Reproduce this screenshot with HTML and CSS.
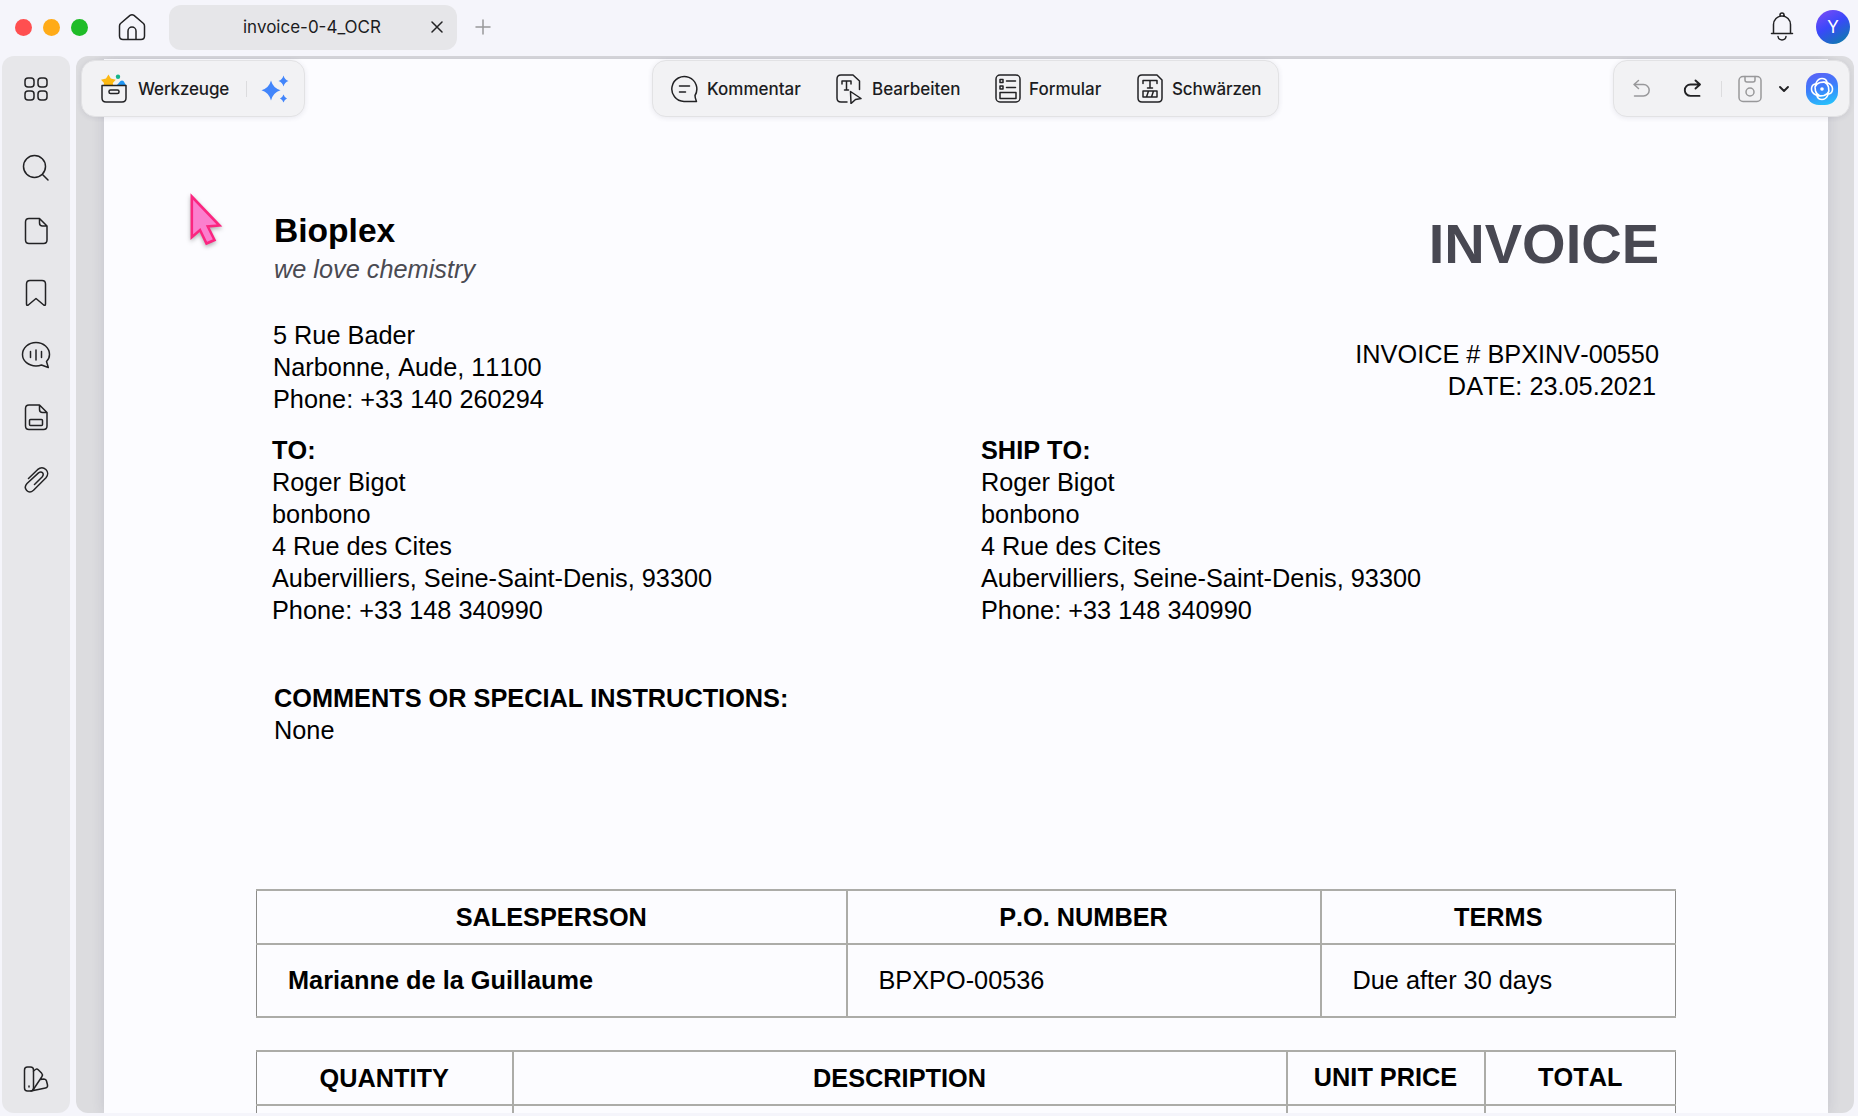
FILE: index.html
```html
<!DOCTYPE html>
<html lang="de">
<head>
  <meta charset="UTF-8">
  <meta name="viewport" content="width=device-width, initial-scale=1.0">
  <title>invoice-0-4_OCR</title>
  <link rel="stylesheet" href="styles.css">
</head>
<body>
  <header class="titlebar">
    <div class="lights">
      <span class="light red"></span>
      <span class="light yellow"></span>
      <span class="light green"></span>
    </div>
    <svg class="icon home" width="28" height="28" viewBox="0 0 28 28"><path d="M2.5 10.5 12 2.4q2-1.5 4 0l9.5 8.1q1 1 1 2.500V23q0 3.500-3.500 3.500H5Q1.500 26.500 1.500 23V13q0-1.500 1-2.500zM10 26V18a4 4 0 0 1 8 0v8"/></svg>
    <div class="tab">
      <span class="tab-name">invoice-0-4_OCR</span>
      <svg class="icon tab-close" width="12" height="12" viewBox="0 0 12 12"><path d="M1 1l10 10M11 1 1 11"/></svg>
    </div>
    <svg class="icon new-tab" width="16" height="16" viewBox="0 0 16 16"><path d="M8 1v14M1 8h14"/></svg>
    <svg class="icon bell" width="24" height="30" viewBox="0 0 24 30"><path d="M1.500 21.500h21M3.500 21.500V12.500a8.500 8.500 0 0 1 17 0v9M10 4V3a2 2 0 0 1 4 0v1M8 24.500c.5 4.500 7.500 4.500 8 0"/></svg>
    <div class="avatar">Y</div>
  </header>

  <div class="main">
    <nav class="sidebar">
      <svg class="icon grid-icon" width="28" height="28" viewBox="0 0 28 28"><rect x="3" y="3" width="9" height="9" rx="3"/><rect x="16" y="3" width="9" height="9" rx="3"/><rect x="3" y="16" width="9" height="9" rx="3"/><rect x="16" y="16" width="9" height="9" rx="3"/></svg>
      <svg class="icon" width="28" height="28" viewBox="0 0 28 28"><circle cx="12.500" cy="12.500" r="11"/><path d="M20.500 20.500 26 26"/></svg>
      <svg class="icon" width="28" height="28" viewBox="0 0 28 28"><path d="M7 1.500h10.500L25 9v14q0 3.500-3.500 3.500H7q-3.500 0-3.500-3.500V5q0-3.500 3.500-3.500zM17.500 1.500V6q0 3 3 3H25"/></svg>
      <svg class="icon" width="28" height="28" viewBox="0 0 28 28"><path d="M8 1.500h12q3.500 0 3.500 3.500v20q0 2-1.800 1L14 19.500 6.300 26q-1.800 1-1.800-1V5Q4.500 1.500 8 1.500z"/></svg>
      <svg class="icon" width="30" height="28" viewBox="0 0 30 28"><path d="M25.500 20.500C27.500 18.500 28.500 16 28.500 13.500 28.500 7 22.500 1.500 15 1.500S1.500 7 1.500 13.500 7.500 25 15 25q3 0 5.500-1l6.800 2.500zM9.500 10.500v6M15 9v10M20.500 10.500v6"/></svg>
      <svg class="icon" width="28" height="28" viewBox="0 0 28 28"><path d="M7 2h10.500L25 9.500V23q0 3.500-3.500 3.500H7q-3.500 0-3.500-3.500V5.500Q3.500 2 7 2zM17.500 2v4.500q0 3 3 3H25"/><rect x="7.500" y="16.500" width="13" height="6" rx="1"/></svg>
      <svg class="icon" width="28" height="28" viewBox="0 0 28 28"><path d="M6.500 12.500 15.500 3.700c6-5 13.500 2 8.500 8L11.500 24.200c-5 4.500-11-1.700-6.500-6.700L16.500 6.900c3.500-2.400 6 1 3.800 3.900L12.500 18.500"/></svg>
      <svg class="icon palette" width="28" height="28" viewBox="0 0 28 28"><rect x="2.500" y="2" width="9" height="24" rx="3"/><path d="M11.500 6l2-1.500q1.500-1 3 .5l3 3q1.500 1.500.5 3.500L11 25M18.500 14.500l3-.5q2.500 0 3 2l1 4q.5 2.500-2 3L9 26M7 21v1"/></svg>
    </nav>

    <section class="workspace">
      <div class="toolbars">
        <div class="toolbar tools">
          <svg class="icon" width="28" height="30" viewBox="0 0 28 30"><path class="star" d="m8.500.5 2.300 4 5 1.200-3 3.400.5 3H3.500l.5-3L1 5.700l5-1.200z"/><circle class="dot" cx="18" cy="2.800" r="2.200"/><path class="tri" d="M16.500 11.500l4-4.500q1.500-1.200 3 0l3 5z"/><path d="M2 11.500h24V24q0 4-4 4H6q-4 0-4-4z"/><rect x="9" y="16" width="10" height="3.500" rx="1.500"/></svg>
          <span>Werkzeuge</span>
          <i class="divider"></i>
          <svg class="sparkle" width="28" height="28" viewBox="0 0 28 28"><path d="M10 5.500q2 7.500 9.500 9.700Q12 17.500 10 25.500 8 17.500.5 15.200 8 13 10 5.500z"/><path d="M22.500.5q1.200 4.300 5 5.500-3.800 1.300-5 5.500-1.200-4.200-5-5.500 3.800-1.200 5-5.500zM22.500 19.500q1 3 3.500 4-2.500 1-3.500 4-1-3-3.500-4 2.500-1 3.500-4z"/></svg>
        </div>

        <div class="toolbar modes">
          <div class="mode kommentar">
            <svg class="icon" width="28" height="28" viewBox="0 0 28 28"><path d="M26.500 26.500H14A12.500 12.500 0 1 1 25 20.500q0 2.500 1.500 6zM9.500 11h10M9.500 17h6"/></svg>
            <span>Kommentar</span>
          </div>
          <div class="mode bearbeiten">
            <svg class="icon" width="28" height="30" viewBox="0 0 28 30"><path d="M12 28H6q-4 0-4-4V5q0-4 4-4h12l6.500 6v8.500M7 10V7h9v3M11.500 7v9M9.500 16h4M15.500 17.500l10.500 7-5.500 1-4.500 4z"/></svg>
            <span>Bearbeiten</span>
          </div>
          <div class="mode formular">
            <svg class="icon" width="28" height="30" viewBox="0 0 28 30"><rect x="2" y="1" width="24" height="27" rx="4"/><path d="M6 5.500h3v3H6zM6 12h3v3H6zM12.500 7h9M12.500 13.500h9M6 18.500h16v6H6z"/></svg>
            <span>Formular</span>
          </div>
          <div class="mode schwaerzen">
            <svg class="icon" width="28" height="30" viewBox="0 0 28 30"><path d="M6 1h15l5 5v18q0 4-4 4H6q-4 0-4-4V5q0-4 4-4zM7 9.500v-3h14v3M14 6.500V14M11.500 14h5M7 17h14v6H7zM10.500 23l2-6M15.500 23l2-6"/></svg>
            <span>Schwärzen</span>
          </div>
        </div>

        <div class="toolbar actions">
          <svg class="icon muted undo" width="20" height="20" viewBox="0 0 20 20"><path d="M6.500 1.500 2 5.500l4.500 4M2 5.500h9.500a5.700 5.700 0 0 1 0 11.400H2.500"/></svg>
          <svg class="icon bold redo" width="20" height="20" viewBox="0 0 20 20"><path d="m13.500 1.500 4.500 4-4.500 4M18 5.500H8.500a5.700 5.700 0 0 0 0 11.400h9"/></svg>
          <i class="divider"></i>
          <svg class="icon muted save" width="26" height="28" viewBox="0 0 26 28"><rect x="2" y="1.500" width="22" height="25" rx="4"/><path d="M8 1.500V5q0 2 2 2h6q2 0 2-2V1.500"/><circle cx="13" cy="17" r="4"/></svg>
          <svg class="icon bold chevron" width="12" height="8" viewBox="0 0 12 8"><path d="m2 2 4 4 4-4"/></svg>
          <div class="ai">
            <svg width="26" height="26" viewBox="0 0 26 26"><path d="M6.500 15C5 9 8 2.500 13 2.500q4 0 5 3.500M15 19.500C9 21 2.500 18 2.500 13q0-4 3.500-5M19.500 11C21 17 18 23.500 13 23.500q-4 0-5-3.500M11 6.500C17 5 23.500 8 23.500 13q0 4-3.500 5M6.500 15q1 3.500 4.500 5M15 19.500q3.500-1 5-4.500M19.500 11q-1-3.500-4.500-5M11 6.500Q7.500 7.500 6 11"/><circle cx="13" cy="13" r="1.800"/></svg>
          </div>
        </div>
      </div>

      <article class="sheet">
        <div class="head">
          <div>
            <h2>Bioplex</h2>
            <p class="slogan">we love chemistry</p>
            <p class="address">5 Rue Bader<br>Narbonne, Aude, 11100<br>Phone: +33 140 260294</p>
          </div>
          <div class="head-right">
            <h1>INVOICE</h1>
            <p>INVOICE # BPXINV-00550</p>
            <p class="date">DATE: 23.05.2021</p>
          </div>
        </div>

        <div class="parties">
          <p><b>TO:</b><br>Roger Bigot<br>bonbono<br>4 Rue des Cites<br>Aubervilliers, Seine-Saint-Denis, 93300<br>Phone: +33 148 340990</p>
          <p><b>SHIP TO:</b><br>Roger Bigot<br>bonbono<br>4 Rue des Cites<br>Aubervilliers, Seine-Saint-Denis, 93300<br>Phone: +33 148 340990</p>
        </div>

        <p class="comments"><b>COMMENTS OR SPECIAL INSTRUCTIONS:</b><br>None</p>

        <table class="order">
          <colgroup><col class="c-sales"><col class="c-po"><col></colgroup>
          <tr><th>SALESPERSON</th><th>P.O. NUMBER</th><th>TERMS</th></tr>
          <tr><td><b>Marianne de la Guillaume</b></td><td>BPXPO-00536</td><td>Due after 30 days</td></tr>
        </table>

        <table class="items">
          <colgroup><col class="c-qty"><col class="c-desc"><col class="c-unit"><col></colgroup>
          <tr><th>QUANTITY</th><th>DESCRIPTION</th><th class="raised">UNIT PRICE</th><th class="raised">TOTAL</th></tr>
          <tr><td></td><td></td><td></td><td></td></tr>
        </table>
      </article>
    </section>
  </div>

  <svg class="pointer" width="44" height="64" viewBox="0 0 44 64"><path d="M6.800 6.500V47.200L15 40 21.500 53.500 29.500 50 22.800 36.500 34.500 35.500z"/></svg>
</body>
</html>
```

FILE: styles.css
```css
* {
  box-sizing: border-box;
}
body {
  margin: 0;
  height: 1116px;
  display: flex;
  flex-direction: column;
  overflow: hidden;
  background: #f5f5fb;
  color: #1c1c1e;
  font-family: Inter, sans-serif;
  font-size: 17px;
}
h1, h2, p {
  margin: 0;
}
.icon {
  display: block;
  flex: none;
  fill: none;
  stroke: #222224;
  stroke-width: 1.5;
  stroke-linecap: round;
  stroke-linejoin: round;
}
.icon.muted {
  stroke: #98989a;
}
.icon.bold {
  stroke-width: 1.9;
}

/* title bar */
.titlebar {
  flex: none;
  height: 56px;
  padding: 0 8px 2px 15px;
  display: flex;
  align-items: center;
}
.lights {
  display: flex;
  gap: 11px;
}
.light {
  width: 17px;
  height: 17px;
  border-radius: 50%;
}
.red {
  background: #ff4f50;
}
.yellow {
  background: #ffab18;
}
.green {
  background: #1fbc28;
}
.home {
  margin-left: 30px;
}
.tab {
  width: 288px;
  height: 45px;
  margin-left: 23px;
  padding: 0 14px 0 74px;
  display: flex;
  align-items: center;
  justify-content: space-between;
  border-radius: 12px;
  background: #e6e6e9;
}
.new-tab {
  margin-left: 18px;
  stroke: #98989a;
}
.bell {
  margin-left: auto;
}
.avatar {
  width: 34px;
  height: 34px;
  margin-left: 22px;
  border-radius: 50%;
  background: linear-gradient(150deg, #7b4cf5 5%, #3a48fa 45%, #0b7fa8 95%);
  color: #fff;
  line-height: 34px;
  text-align: center;
}

.main {
  flex: 1;
  min-height: 0;
  display: flex;
  gap: 6px;
  padding: 0 4px 3px 2px;
}

/* left rail */
.sidebar {
  width: 68px;
  padding: 19px 0 20px;
  display: flex;
  flex-direction: column;
  align-items: center;
  gap: 34.3px;
  border-radius: 12px;
  background: #e7e7ea;
}
.grid-icon {
  margin-bottom: 17px;
}
.palette {
  margin-top: auto;
}

/* document area */
.workspace {
  flex: 1;
  position: relative;
  padding: 3px 26px 0 28px;
  overflow: hidden;
  border-radius: 12px;
  background: #dcdcdf;
}
.toolbars {
  position: absolute;
  z-index: 1;
  top: 4px;
  left: 5px;
  right: 4px;
  display: flex;
}
.toolbar {
  height: 57px;
  display: flex;
  align-items: center;
  border: 1px solid #e2e2e4;
  border-radius: 14px;
  background: #f2f2f4;
  box-shadow: 0 1px 5px rgba(60, 60, 90, 0.1);
  font-weight: 500;
}
.divider {
  width: 1px;
  height: 16px;
  background: #dcdcde;
}
.tools {
  width: 224px;
  padding-left: 18px;
}
.tools span {
  width: 97px;
  margin-left: 10px;
  letter-spacing: -0.15px;
}
.tools .divider {
  margin-left: 11px;
}
.tools .star {
  fill: #fdb913;
  stroke: none;
}
.tools .dot {
  fill: #16b48a;
  stroke: none;
}
.tools .tri {
  fill: #2196f3;
  stroke: none;
}
.sparkle {
  margin-left: 14px;
  fill: #4285fb;
}
.modes {
  width: 627px;
  margin-left: 347px;
  padding-left: 17px;
}
.mode {
  display: flex;
  align-items: center;
  gap: 9px;
}
.kommentar {
  width: 165px;
}
.bearbeiten {
  width: 159px;
}
.formular {
  width: 142px;
  gap: 7px;
}
.schwaerzen {
  gap: 8px;
  letter-spacing: -0.15px;
}
.actions {
  width: 237px;
  margin-left: auto;
  padding-left: 18px;
}
.redo {
  margin-left: 30px;
}
.actions .divider {
  margin-left: 19px;
}
.save {
  margin-left: 15px;
}
.chevron {
  margin-left: 15px;
}
.ai {
  width: 32px;
  height: 32px;
  margin-left: 16px;
  display: flex;
  align-items: center;
  justify-content: center;
  border-radius: 13px;
  background: linear-gradient(165deg, #5a62f6 5%, #3d7cfb 45%, #25c4fb 95%);
}
.ai svg {
  fill: none;
  stroke: #fff;
  stroke-width: 1.6;
  stroke-linecap: round;
}
.ai circle {
  fill: #fff;
  stroke: none;
}

/* invoice page */
.sheet {
  height: 1054px;
  padding: 152px 151px 0 152px;
  overflow: hidden;
  background: #fcfcff;
  box-shadow: 0 0 12px rgba(60, 60, 90, 0.14);
  color: #000;
  font: 25.3px/32px "Liberation Sans", Arial, sans-serif;
  font-kerning: none;
}
.head {
  display: flex;
  justify-content: space-between;
  padding: 0 18px 0 17px;
}
.head h2 {
  padding-left: 1px;
  font-size: 33.6px;
  line-height: 40px;
}
.slogan {
  margin-top: 2px;
  padding-left: 1px;
  color: #4a4a52;
  font-style: italic;
}
.address {
  margin-top: 34px;
}
.head-right {
  padding-top: 1px;
  text-align: right;
}
.head-right h1 {
  margin-bottom: 62px;
  color: #484852;
  font-size: 56px;
  line-height: 64px;
}
.date {
  padding-right: 3px;
}
.parties {
  display: grid;
  grid-template-columns: 709px 1fr;
  margin-top: 19px;
  padding-left: 16px;
}
.comments {
  margin-top: 56px;
  padding-left: 18px;
}
table {
  width: 1420px;
  table-layout: fixed;
  border-collapse: collapse;
}
th, td {
  padding: 0;
  border: 2px solid #acaca8;
}
th:first-child, td:first-child {
  border-left: 1px solid #8c8c8a;
}
th:last-child, td:last-child {
  border-right: 1px solid #8c8c8a;
}
td {
  text-align: left;
}
.order {
  margin-top: 143px;
}
.order tr:first-child {
  height: 54px;
}
.order tr:last-child {
  height: 73px;
}
.order td {
  padding: 0 0 2px 31px;
}
.c-sales {
  width: 590px;
}
.c-po {
  width: 474px;
}
.items {
  margin-top: 32px;
}
.items tr {
  height: 54px;
}
.items th {
  padding-bottom: 1px;
}
.items .raised {
  padding-bottom: 3px;
}
.c-qty {
  width: 256px;
}
.c-desc {
  width: 774px;
}
.c-unit {
  width: 198px;
}

.pointer {
  position: absolute;
  z-index: 2;
  left: 185px;
  top: 190px;
  fill: #fb7fce;
  stroke: #fb2680;
  stroke-width: 2.6;
  filter: drop-shadow(0 2px 2px rgba(0, 0, 0, 0.3));
}
```
